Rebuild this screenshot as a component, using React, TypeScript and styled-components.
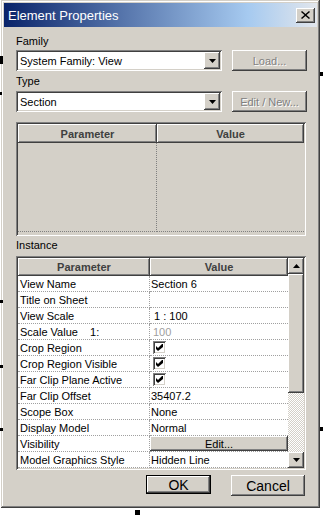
import { Fragment } from 'react';
import styled, { createGlobalStyle } from 'styled-components';

const FACE = '#d4d0c8';

const GlobalStyle = createGlobalStyle`
  html, body {
    margin: 0;
    padding: 0;
    background: #ffffff;
  }
  body {
    font-family: 'Liberation Sans', Arial, sans-serif;
    font-size: 11px;
    color: #000000;
  }
  * {
    box-sizing: border-box;
  }
`;

const raised = `
  box-shadow: inset -1px -1px #404040, inset 1px 1px #ffffff,
    inset -2px -2px #808080, inset 2px 2px ${FACE};
`;

const sunken = `
  box-shadow: inset 1px 1px #808080, inset -1px -1px #ffffff,
    inset 2px 2px #404040, inset -2px -2px ${FACE};
`;

const Page = styled.div`
  position: relative;
  width: 323px;
  height: 515px;
  overflow: hidden;
  padding-left: 1px;
`;

const Mark = styled.span<{ $x: number; $y: number; $w: number; $h: number }>`
  position: absolute;
  left: ${p => p.$x}px;
  top: ${p => p.$y}px;
  width: ${p => p.$w}px;
  height: ${p => p.$h}px;
  background: #000000;
`;

const Dialog = styled.div`
  width: 319px;
  height: 508px;
  background: ${FACE};
  padding: 3px;
  display: flex;
  flex-direction: column;
  box-shadow: inset -1px -1px #404040, inset 1px 1px ${FACE},
    inset -2px -2px #808080, inset 2px 2px #ffffff;
`;

const TitleBar = styled.div`
  height: 24px;
  display: flex;
  align-items: center;
  justify-content: space-between;
  padding: 0 2px 0 4px;
  background: linear-gradient(90deg, #0a246a 0%, #a6caf0 78%, #e2e6ec 100%);
`;

const Title = styled.span`
  color: #ffffff;
  font-size: 13px;
`;

const CloseButton = styled.div`
  width: 19px;
  height: 15px;
  background: ${FACE};
  display: flex;
  align-items: center;
  justify-content: center;
  ${raised}
`;

const Body = styled.div`
  flex: 1;
  display: flex;
  flex-direction: column;
  padding: 7px 10px 0 12px;
`;

const Label = styled.div<{ $top: number }>`
  height: 14px;
  line-height: 14px;
  margin-top: ${p => p.$top}px;
`;

const ComboRow = styled.div<{ $top: number }>`
  display: flex;
  gap: 10px;
  margin-top: ${p => p.$top}px;
`;

const Combo = styled.div`
  width: 206px;
  height: 21px;
  background: #ffffff;
  display: flex;
  align-items: center;
  padding: 2px 2px 2px 4px;
  ${sunken}
`;

const ComboText = styled.span`
  flex: 1;
`;

const ArrowButton = styled.div<{ $w: number; $h: number }>`
  width: ${p => p.$w}px;
  height: ${p => p.$h}px;
  background: ${FACE};
  display: flex;
  align-items: center;
  justify-content: center;
  ${raised}
`;

const PushButton = styled.div<{ $w: number; $disabled?: boolean; $default?: boolean; $size?: number }>`
  width: ${p => p.$w}px;
  height: ${p => (p.$default ? 19 : 21)}px;
  background: ${FACE};
  display: flex;
  align-items: center;
  justify-content: center;
  font-size: ${p => p.$size ?? 11}px;
  color: ${p => (p.$disabled ? '#808080' : '#000000')};
  text-shadow: ${p => (p.$disabled ? '1px 1px #ffffff' : 'none')};
  border: ${p => (p.$default ? '1px solid #000000' : 'none')};
  ${raised}
`;

const TypeTable = styled.div`
  margin-top: 10px;
  width: 290px;
  height: 114px;
  padding: 2px;
  display: grid;
  grid-template-columns: 139px 1fr;
  grid-template-rows: 19px 1fr;
  ${sunken}
`;

const HeaderCell = styled.div`
  background: ${FACE};
  display: flex;
  align-items: center;
  justify-content: center;
  font-weight: bold;
  color: #404040;
  ${raised}
`;

const EmptyCell = styled.div<{ $divider?: boolean }>`
  background: ${FACE};
  border-bottom: 1px dotted #808080;
  border-right: ${p => (p.$divider ? '1px dotted #808080' : 'none')};
  margin-bottom: 2px;
`;

const InstanceTable = styled.div`
  margin-top: 4px;
  width: 290px;
  height: 214px;
  padding: 2px;
  display: flex;
  ${sunken}
`;

const Grid = styled.div`
  flex: 1;
  display: grid;
  grid-template-columns: 132px 1fr;
  grid-template-rows: 18px repeat(12, 16px);
  background: #ffffff;
`;

const Cell = styled.div<{ $param?: boolean; $indent?: number; $muted?: boolean }>`
  height: 16px;
  display: flex;
  align-items: center;
  white-space: pre;
  padding-left: ${p => (p.$param ? 2 : p.$indent ?? 1)}px;
  color: ${p => (p.$muted ? '#a0a0a0' : '#000000')};
  border-bottom: 1px dotted #a0a0a0;
  border-right: ${p => (p.$param ? '1px dotted #a0a0a0' : 'none')};
`;

const Check = styled.div`
  width: 13px;
  height: 13px;
  margin-left: 2px;
  background: #ffffff;
  display: flex;
  align-items: center;
  justify-content: center;
  ${sunken}
`;

const CellButton = styled.div`
  flex: 1;
  align-self: stretch;
  background: ${FACE};
  display: flex;
  align-items: center;
  justify-content: center;
  margin-left: -1px;
  ${raised}
`;

const ScrollBar = styled.div`
  width: 16px;
  display: flex;
  flex-direction: column;
  background: repeating-conic-gradient(${FACE} 0 25%, #ffffff 0 50%) 0 0 / 2px 2px;
`;

const Thumb = styled.div`
  height: 119px;
  background: ${FACE};
  ${raised}
`;

const Track = styled.div`
  flex: 1;
`;

const Footer = styled.div`
  display: flex;
  justify-content: flex-end;
  gap: 20px;
  margin-top: 5px;
  padding-right: 2px;
`;

type Row = {
  name: string;
  value?: string;
  indent?: number;
  muted?: boolean;
  check?: boolean;
  button?: string;
};

const rows: Row[] = [
  { name: 'View Name', value: 'Section 6' },
  { name: 'Title on Sheet', value: '' },
  { name: 'View Scale', value: '1 : 100', indent: 4 },
  { name: 'Scale Value    1:', value: '100', indent: 3, muted: true },
  { name: 'Crop Region', check: true },
  { name: 'Crop Region Visible', check: true },
  { name: 'Far Clip Plane Active', check: true },
  { name: 'Far Clip Offset', value: '35407.2' },
  { name: 'Scope Box', value: 'None' },
  { name: 'Display Model', value: 'Normal' },
  { name: 'Visibility', button: 'Edit...' },
  { name: 'Model Graphics Style', value: 'Hidden Line' },
];

const marks = [
  { x: 0, y: 56, w: 3, h: 8 },
  { x: 0, y: 92, w: 2, h: 3 },
  { x: 320, y: 72, w: 3, h: 4 },
  { x: 0, y: 300, w: 3, h: 3 },
  { x: 0, y: 365, w: 3, h: 3 },
  { x: 0, y: 428, w: 3, h: 3 },
  { x: 320, y: 427, w: 3, h: 4 },
  { x: 135, y: 510, w: 5, h: 5 },
];

function Arrow({ up }: { up?: boolean }) {
  return (
    <svg width="7" height="4" viewBox="0 0 7 4">
      <path d={up ? 'M3.5 0 L7 4 L0 4 Z' : 'M0 0 L7 0 L3.5 4 Z'} fill="#000" />
    </svg>
  );
}

function CheckMark() {
  return (
    <svg width="7" height="7" viewBox="0 0 7 7">
      <path d="M0 2 L2 4 L6 0 L7 0 L7 3 L2 7 L0 5 Z" fill="#000" />
    </svg>
  );
}

export default function App() {
  return (
    <Page>
      <GlobalStyle />
      {marks.map((m, i) => (
        <Mark key={i} $x={m.x} $y={m.y} $w={m.w} $h={m.h} />
      ))}
      <Dialog>
        <TitleBar>
          <Title>Element Properties</Title>
          <CloseButton>
            <svg width="9" height="8" viewBox="0 0 9 8">
              <path d="M1 0 L4.5 3 L8 0 L9 1 L5.5 4 L9 7 L8 8 L4.5 5 L1 8 L0 7 L3.5 4 L0 1 Z" fill="#000" />
            </svg>
          </CloseButton>
        </TitleBar>

        <Body>
          <Label $top={0}>Family</Label>
          <ComboRow $top={2}>
            <Combo>
              <ComboText>System Family: View</ComboText>
              <ArrowButton $w={16} $h={17}>
                <Arrow />
              </ArrowButton>
            </Combo>
            <PushButton $w={75} $disabled $size={11}>Load...</PushButton>
          </ComboRow>

          <Label $top={3}>Type</Label>
          <ComboRow $top={3}>
            <Combo>
              <ComboText>Section</ComboText>
              <ArrowButton $w={16} $h={17}>
                <Arrow />
              </ArrowButton>
            </Combo>
            <PushButton $w={75} $disabled $size={11}>Edit / New...</PushButton>
          </ComboRow>

          <TypeTable>
            <HeaderCell>Parameter</HeaderCell>
            <HeaderCell>Value</HeaderCell>
            <EmptyCell $divider />
            <EmptyCell />
          </TypeTable>

          <Label $top={2}>Instance</Label>
          <InstanceTable>
            <Grid>
              <HeaderCell>Parameter</HeaderCell>
              <HeaderCell>Value</HeaderCell>
              {rows.map(r => (
                <Fragment key={r.name}>
                  <Cell $param>{r.name}</Cell>
                  <Cell $indent={r.indent} $muted={r.muted}>
                    {r.check ? (
                      <Check>
                        <CheckMark />
                      </Check>
                    ) : r.button ? (
                      <CellButton>{r.button}</CellButton>
                    ) : (
                      r.value
                    )}
                  </Cell>
                </Fragment>
              ))}
            </Grid>
            <ScrollBar>
              <ArrowButton $w={16} $h={16}>
                <Arrow up />
              </ArrowButton>
              <Thumb />
              <Track />
              <ArrowButton $w={16} $h={16}>
                <Arrow />
              </ArrowButton>
            </ScrollBar>
          </InstanceTable>

          <Footer>
            <PushButton $w={65} $default $size={14}>OK</PushButton>
            <PushButton $w={74} $size={14}>Cancel</PushButton>
          </Footer>
        </Body>
      </Dialog>
    </Page>
  );
}
